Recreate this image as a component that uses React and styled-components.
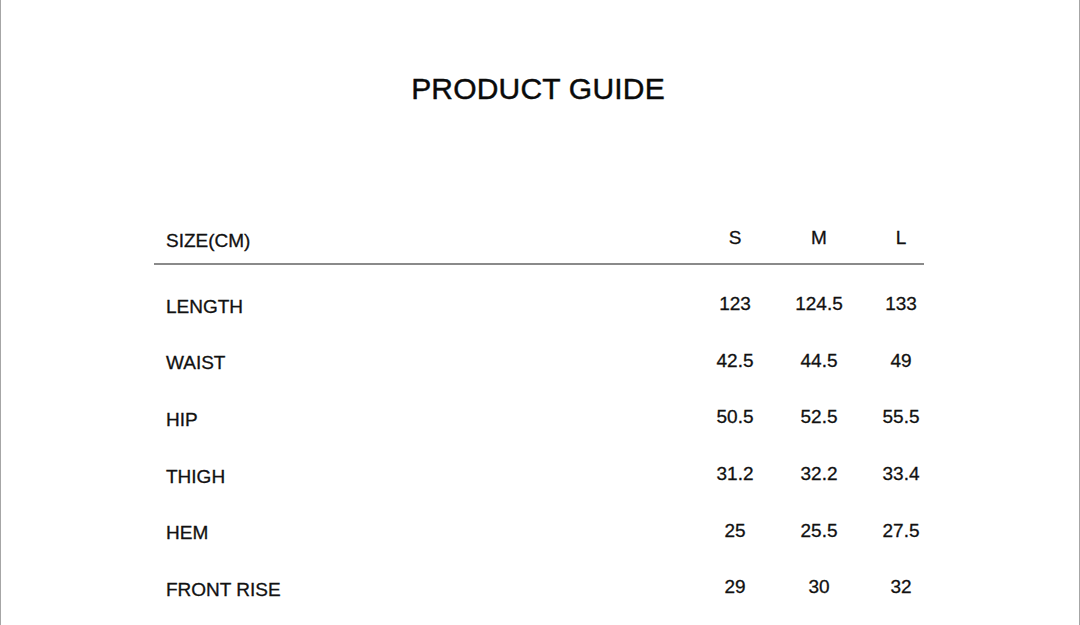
import React from "react";
import styled, { createGlobalStyle } from "styled-components";

const GlobalStyle = createGlobalStyle`
  body {
    margin: 0;
    background: #ffffff;
    font-family: "Liberation Sans", Arial, sans-serif;
    color: #111111;
  }
`;

const Page = styled.div`
  width: 1080px;
  height: 625px;
  box-sizing: border-box;
  border-left: 1px solid #a6a6a6;
  border-right: 1px solid #a6a6a6;
  background: #ffffff;
  overflow: hidden;
`;

const Title = styled.h1`
  margin: 71px 0 0;
  padding-right: 4px;
  font-size: 30px;
  line-height: 36px;
  font-weight: 400;
  text-align: center;
  letter-spacing: 0.2px;
  color: #0a0a0a;
  -webkit-text-stroke: 0.45px #0a0a0a;
`;

const Table = styled.div`
  margin-top: 107px;
  margin-left: 153px;
  width: 787px;
  display: flex;
  flex-direction: column;
`;

const Row = styled.div`
  display: grid;
  grid-template-columns: 539px 84px 84px 80px;
  align-items: center;
  height: ${(props) => (props.header ? "48px" : "56.6px")};
`;

const Label = styled.div`
  padding-left: 12px;
  padding-top: 5px;
  font-size: 19px;
  line-height: 24px;
  white-space: nowrap;
  -webkit-text-stroke: 0.3px #111111;
`;

const Value = styled.div`
  text-align: center;
  font-size: 19px;
  line-height: 24px;
  -webkit-text-stroke: 0.3px #111111;
`;

const Divider = styled.div`
  width: 770px;
  height: 2px;
  margin-top: 1px;
  margin-bottom: 11px;
  background: #8a8a8a;
`;

const sizes = ["S", "M", "L"];

const rows = [
  { name: "LENGTH", values: ["123", "124.5", "133"] },
  { name: "WAIST", values: ["42.5", "44.5", "49"] },
  { name: "HIP", values: ["50.5", "52.5", "55.5"] },
  { name: "THIGH", values: ["31.2", "32.2", "33.4"] },
  { name: "HEM", values: ["25", "25.5", "27.5"] },
  { name: "FRONT RISE", values: ["29", "30", "32"] },
];

const App = () => {
  return (
    <Page>
      <GlobalStyle />
      <Title>PRODUCT GUIDE</Title>
      <Table>
        <Row header>
          <Label>SIZE(CM)</Label>
          {sizes.map((s) => (
            <Value key={s}>{s}</Value>
          ))}
        </Row>
        <Divider />
        {rows.map((row) => (
          <Row key={row.name}>
            <Label>{row.name}</Label>
            {row.values.map((v, i) => (
              <Value key={i}>{v}</Value>
            ))}
          </Row>
        ))}
      </Table>
    </Page>
  );
};

export default App;
